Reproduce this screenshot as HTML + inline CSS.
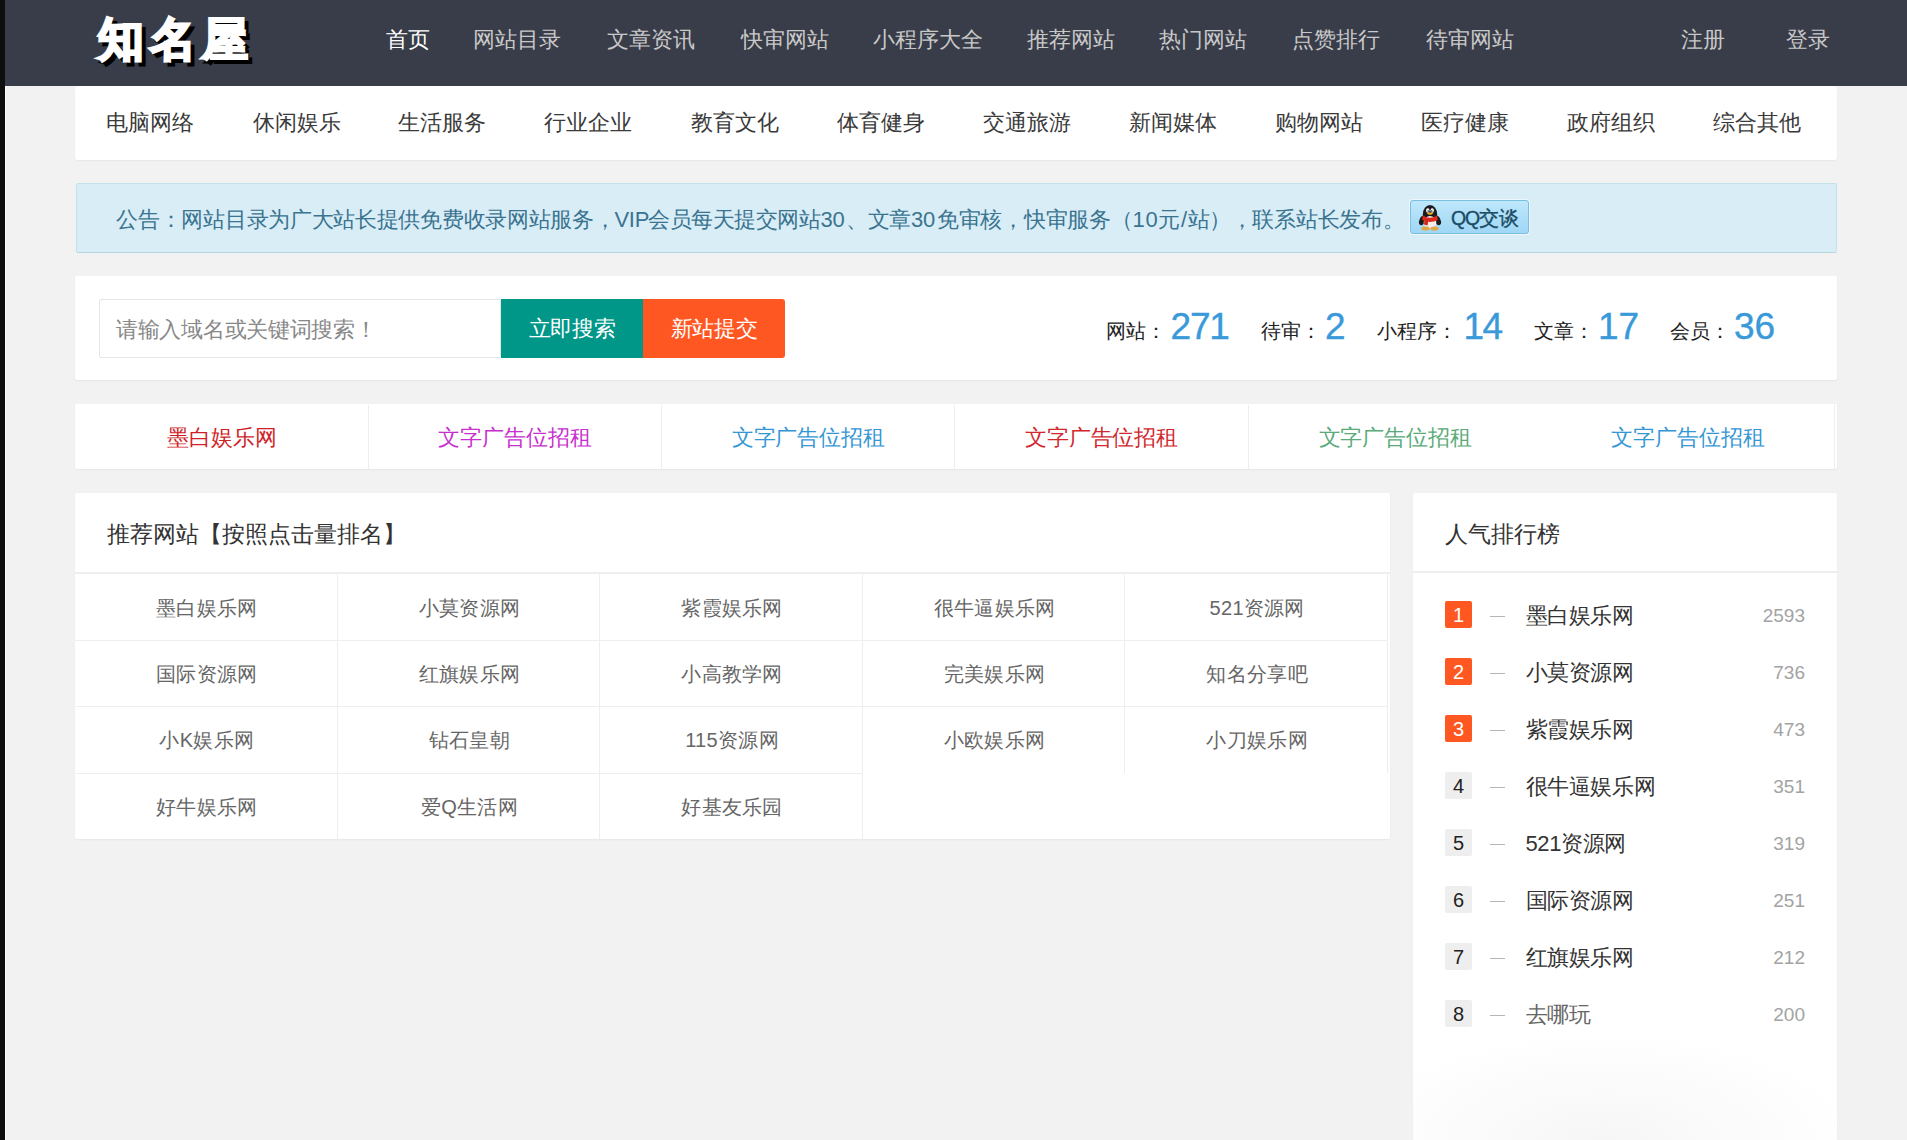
<!DOCTYPE html>
<html><head><meta charset="utf-8">
<style>
*{margin:0;padding:0;box-sizing:border-box}
html,body{width:1907px;height:1140px;overflow:hidden}
body{text-spacing-trim:space-all;position:relative;background:#f2f2f2;font-family:"Liberation Sans",sans-serif;color:#333}
.a{position:absolute;white-space:nowrap}
.strip{left:0;top:0;width:5px;height:1140px;background:#0e0e0e;z-index:9}
.nav{left:0;top:0;width:1907px;height:86px;background:#393d49}
.logo{top:12px;font-size:46px;font-weight:900;line-height:54px;letter-spacing:6px}
.nl{top:24px;font-size:22px;line-height:32px;color:#c8c8c8}
.nl.on{color:#fff}
.card{background:#fff;border-radius:2px;box-shadow:0 1px 2px rgba(0,0,0,.05)}
.cat{top:86px;left:75px;width:1762px;height:74px}
.ct{top:107px;font-size:22px;line-height:32px;color:#3a3a3a}
.notice{left:76px;top:183px;width:1761px;height:70px;background:#d9edf7;border:1px solid #c3e1ec;border-bottom-color:#b5d6e3;border-radius:2px}
.nt{top:204px;font-size:22px;letter-spacing:-0.3px;line-height:32px;color:#3a7490}
.qq{left:1410px;top:200px;width:119px;height:34px;border:1px solid #79bfe0;border-radius:3px;background:linear-gradient(#bfe7fc,#9fd7f5);box-shadow:0 0 0 1px rgba(255,255,255,.5)}
.search{left:75px;top:276px;width:1762px;height:104px}
.inp{left:99px;top:299px;width:402px;height:59px;border:1px solid #e6e6e6;border-radius:2px;background:#fff}
.ph{left:116px;top:314px;font-size:22px;letter-spacing:-0.3px;line-height:32px;color:#888}
.b1{left:501px;top:299px;width:142px;height:59px;background:#009688;color:#fff;font-size:22px;letter-spacing:-0.3px;line-height:59px;text-align:center}
.b2{left:643px;top:299px;width:142px;height:59px;background:#ff5722;color:#fff;font-size:22px;letter-spacing:-0.3px;line-height:59px;text-align:center;border-radius:0 3px 3px 0}
.sl{top:316px;font-size:20px;line-height:30px;color:#222}
.sn{top:305px;font-size:37px;line-height:44px;color:#3a9ad9;-webkit-text-stroke:0.4px #3a9ad9}
.ads{left:75px;top:404px;width:1762px;height:65px}
.ad{top:405px;width:293.2px;height:64px;border-right:1px solid #eee;font-size:22px;letter-spacing:-0.1px;line-height:65px;text-align:center}
.main{left:75px;top:493px;width:1315px;height:346px}
.mh{left:107px;top:518px;font-size:23px;line-height:32px;color:#333}
.hl{left:75px;top:572px;width:1315px;height:2px;background:#eee}
.cell{width:262.6px;height:66.45px;padding-left:2px;border-right:1px solid #eee;font-size:20px;letter-spacing:0.3px;line-height:67px;text-align:center;color:#666}
.side{left:1413px;top:493px;width:424px;height:700px}
.sh{left:1445px;top:518px;font-size:23px;line-height:32px;color:#333}
.shl{left:1413px;top:571px;width:424px;height:2px;background:#eee}
.rk{left:1445px;width:27px;height:27px;border-radius:2px;background:#eee;color:#222;font-size:20px;line-height:29px;text-align:center}
.rk.hot{background:#ff5722;color:#fff}
.dash{left:1490px;width:15px;height:1.5px;background:#b5b5b5}
.rn{left:1525.5px;font-size:22px;letter-spacing:-0.4px;line-height:30px;color:#333}
.rc{right:102px;font-size:19px;line-height:30px;color:#a3a3a3}
</style></head><body>
<div class="a strip"></div>
<div class="a" style="left:5px;top:86px;width:1px;height:1054px;background:#fbfbfb"></div>
<div class="a nav"></div>
<div class="a logo" style="left:102px;top:16px;color:#000;-webkit-text-stroke:2.5px #000">知名屋</div>
<div class="a logo" style="left:98px;color:#fff;-webkit-text-stroke:2.5px #fff">知名屋</div>
<div class="a nl on" style="left:385.5px">首页</div>
<div class="a nl" style="left:473px">网站目录</div>
<div class="a nl" style="left:606.5px">文章资讯</div>
<div class="a nl" style="left:740.5px">快审网站</div>
<div class="a nl" style="left:873px">小程序大全</div>
<div class="a nl" style="left:1027px">推荐网站</div>
<div class="a nl" style="left:1159px">热门网站</div>
<div class="a nl" style="left:1292px">点赞排行</div>
<div class="a nl" style="left:1426px">待审网站</div>
<div class="a nl" style="left:1680.5px">注册</div>
<div class="a nl" style="left:1785.5px">登录</div>

<div class="a card cat"></div>
<div class="a ct" style="left:105.5px">电脑网络</div>
<div class="a ct" style="left:253px">休闲娱乐</div>
<div class="a ct" style="left:398px">生活服务</div>
<div class="a ct" style="left:544px">行业企业</div>
<div class="a ct" style="left:690.5px">教育文化</div>
<div class="a ct" style="left:836.5px">体育健身</div>
<div class="a ct" style="left:983px">交通旅游</div>
<div class="a ct" style="left:1128.5px">新闻媒体</div>
<div class="a ct" style="left:1275px">购物网站</div>
<div class="a ct" style="left:1421px">医疗健康</div>
<div class="a ct" style="left:1567px">政府组织</div>
<div class="a ct" style="left:1713px">综合其他</div>

<div class="a notice"></div>
<div class="a nt" id="n1" style="left:116.4px">公告：网站目录为广大站长提供免费收录网站服务，</div>
<div class="a nt" id="n2" style="left:614.5px">VIP</div>
<div class="a nt" id="n3" style="left:648.4px;letter-spacing:-0.55px">会员每天提交网站</div>
<div class="a nt" id="n4" style="left:820.5px">30</div>
<div class="a nt" id="n5" style="left:846px">、文章</div>
<div class="a nt" id="n6" style="left:911px">30</div>
<div class="a nt" id="n7" style="left:937px">免审核，快审服务（</div>
<div class="a nt" id="n8" style="left:1132.5px;letter-spacing:0.7px">10元/站</div>
<div class="a nt" id="n9" style="left:1209px">），联系站长发布。</div>
<div class="a qq"></div>
<svg class="a" style="left:1417px;top:204px" width="26" height="27" viewBox="0 0 26 27">
<ellipse cx="5.2" cy="16.5" rx="2.8" ry="4.8" fill="#1a1a1a" transform="rotate(22 5.2 16.5)"/>
<ellipse cx="20.8" cy="16.5" rx="2.8" ry="4.8" fill="#1a1a1a" transform="rotate(-22 20.8 16.5)"/>
<ellipse cx="13" cy="10.5" rx="7.2" ry="9.5" fill="#1c1c1c"/>
<ellipse cx="13" cy="18.5" rx="6.3" ry="6.5" fill="#f6ece8"/>
<path d="M5.8 11.5 Q13 16 20.2 11.5 L20.8 16 Q13 20 5.2 16 Z" fill="#dd2a1c"/>
<path d="M7.5 15 L11.5 15.5 L10.5 21.5 L7 20.5 Z" fill="#d2281b"/>
<ellipse cx="10.8" cy="6.5" rx="1.7" ry="2.3" fill="#fff"/>
<ellipse cx="15.2" cy="6.5" rx="1.7" ry="2.3" fill="#fff"/>
<circle cx="11.2" cy="7" r="0.8" fill="#111"/>
<circle cx="14.8" cy="7" r="0.8" fill="#111"/>
<path d="M9.8 9.2 Q13 7.8 16.2 9.2 Q13 12.4 9.8 9.2Z" fill="#f2b01e"/>
<ellipse cx="8.5" cy="24.5" rx="4.2" ry="2" fill="#e3a647"/>
<ellipse cx="17.5" cy="24.5" rx="4.2" ry="2" fill="#e3a647"/>
</svg>
<div class="a" style="left:1451px;top:203.5px;font-size:19.5px;line-height:28px;color:#1b4c66;letter-spacing:-0.4px;-webkit-text-stroke:0.35px #1b4c66"><span style="letter-spacing:-1.2px">QQ</span>交谈</div>

<div class="a card search"></div>
<div class="a inp"></div>
<div class="a ph">请输入域名或关键词搜索！</div>
<div class="a b1">立即搜索</div>
<div class="a b2">新站提交</div>
<div class="a sl" style="left:1106px">网站：</div><div class="a sn" style="left:1170.5px;letter-spacing:-1.2px">271</div>
<div class="a sl" style="left:1261px">待审：</div><div class="a sn" style="left:1325px">2</div>
<div class="a sl" style="left:1377px">小程序：</div><div class="a sn" style="left:1463.5px;letter-spacing:-1.5px">14</div>
<div class="a sl" style="left:1534px">文章：</div><div class="a sn" style="left:1598px">17</div>
<div class="a sl" style="left:1670px">会员：</div><div class="a sn" style="left:1734px">36</div>

<div class="a card ads"></div>
<div class="a ad" style="left:75.8px;color:#d01f2a">墨白娱乐网</div>
<div class="a ad" style="left:369.0px;color:#c730cf">文字广告位招租</div>
<div class="a ad" style="left:662.2px;color:#3697d5">文字广告位招租</div>
<div class="a ad" style="left:955.4px;color:#d0282e">文字广告位招租</div>
<div class="a ad" style="left:1248.6px;color:#5aab79;border-right:0">文字广告位招租</div>
<div class="a ad" style="left:1541.8px;color:#3697d5">文字广告位招租</div>

<div class="a card main"></div>
<div class="a mh">推荐网站【按照点击量排名】</div>
<div class="a hl"></div>
<div class="a cell" style="left:75.0px;top:573.50px;line-height:68px">墨白娱乐网</div>
<div class="a cell" style="left:337.6px;top:573.50px;line-height:68px">小莫资源网</div>
<div class="a cell" style="left:600.2px;top:573.50px;line-height:68px">紫霞娱乐网</div>
<div class="a cell" style="left:862.8px;top:573.50px;line-height:68px">很牛逼娱乐网</div>
<div class="a cell" style="left:1125.4px;top:573.50px;line-height:68px">521资源网</div>
<div class="a cell" style="left:75.0px;top:639.95px;border-top:1px solid #eee">国际资源网</div>
<div class="a cell" style="left:337.6px;top:639.95px;border-top:1px solid #eee">红旗娱乐网</div>
<div class="a cell" style="left:600.2px;top:639.95px;border-top:1px solid #eee">小高教学网</div>
<div class="a cell" style="left:862.8px;top:639.95px;border-top:1px solid #eee">完美娱乐网</div>
<div class="a cell" style="left:1125.4px;top:639.95px;border-top:1px solid #eee">知名分享吧</div>
<div class="a cell" style="left:75.0px;top:706.40px;border-top:1px solid #eee">小K娱乐网</div>
<div class="a cell" style="left:337.6px;top:706.40px;border-top:1px solid #eee">钻石皇朝</div>
<div class="a cell" style="left:600.2px;top:706.40px;border-top:1px solid #eee">115资源网</div>
<div class="a cell" style="left:862.8px;top:706.40px;border-top:1px solid #eee">小欧娱乐网</div>
<div class="a cell" style="left:1125.4px;top:706.40px;border-top:1px solid #eee">小刀娱乐网</div>
<div class="a cell" style="left:75.0px;top:772.85px;border-top:1px solid #eee">好牛娱乐网</div>
<div class="a cell" style="left:337.6px;top:772.85px;border-top:1px solid #eee">爱Q生活网</div>
<div class="a cell" style="left:600.2px;top:772.85px;border-top:1px solid #eee">好基友乐园</div>

<div class="a card side"></div>
<div class="a" style="left:1413px;top:1030px;width:424px;height:110px;background:radial-gradient(ellipse 60% 100% at 45% 100%,rgba(0,0,0,.035),rgba(0,0,0,0))"></div>
<div class="a sh">人气排行榜</div>
<div class="a shl"></div>
<div class="a rk hot" style="top:601px">1</div>
<div class="a dash" style="top:615.5px"></div>
<div class="a rn" style="top:600.5px">墨白娱乐网</div>
<div class="a rc" style="top:600.5px">2593</div>
<div class="a rk hot" style="top:658px">2</div>
<div class="a dash" style="top:672.5px"></div>
<div class="a rn" style="top:657.5px">小莫资源网</div>
<div class="a rc" style="top:657.5px">736</div>
<div class="a rk hot" style="top:715px">3</div>
<div class="a dash" style="top:729.5px"></div>
<div class="a rn" style="top:714.5px">紫霞娱乐网</div>
<div class="a rc" style="top:714.5px">473</div>
<div class="a rk" style="top:772px">4</div>
<div class="a dash" style="top:786.5px"></div>
<div class="a rn" style="top:771.5px">很牛逼娱乐网</div>
<div class="a rc" style="top:771.5px">351</div>
<div class="a rk" style="top:829px">5</div>
<div class="a dash" style="top:843.5px"></div>
<div class="a rn" style="top:828.5px">521资源网</div>
<div class="a rc" style="top:828.5px">319</div>
<div class="a rk" style="top:886px">6</div>
<div class="a dash" style="top:900.5px"></div>
<div class="a rn" style="top:885.5px">国际资源网</div>
<div class="a rc" style="top:885.5px">251</div>
<div class="a rk" style="top:943px">7</div>
<div class="a dash" style="top:957.5px"></div>
<div class="a rn" style="top:942.5px">红旗娱乐网</div>
<div class="a rc" style="top:942.5px">212</div>
<div class="a rk" style="top:1000px">8</div>
<div class="a dash" style="top:1014.5px"></div>
<div class="a rn" style="top:999.5px;color:#666">去哪玩</div>
<div class="a rc" style="top:999.5px">200</div>
</body></html>
